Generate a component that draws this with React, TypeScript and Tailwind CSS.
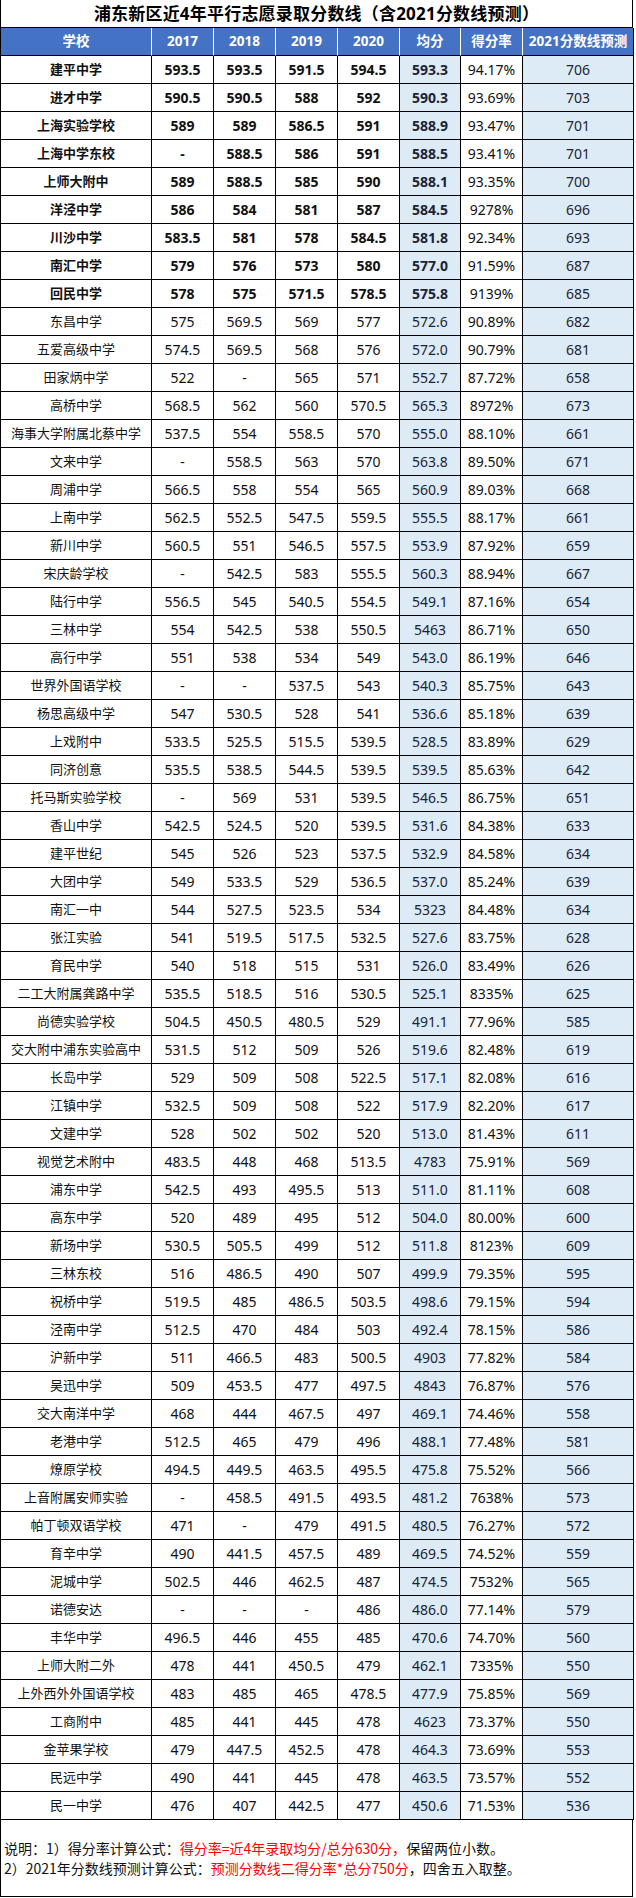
import React from "react";

type Row = [string, string, string, string, string, string, string, string];

const rows: Row[] = [
  ["建平中学", "593.5", "593.5", "591.5", "594.5", "593.3", "94.17%", "706"],
  ["进才中学", "590.5", "590.5", "588", "592", "590.3", "93.69%", "703"],
  ["上海实验学校", "589", "589", "586.5", "591", "588.9", "93.47%", "701"],
  ["上海中学东校", "-", "588.5", "586", "591", "588.5", "93.41%", "701"],
  ["上师大附中", "589", "588.5", "585", "590", "588.1", "93.35%", "700"],
  ["洋泾中学", "586", "584", "581", "587", "584.5", "9278%", "696"],
  ["川沙中学", "583.5", "581", "578", "584.5", "581.8", "92.34%", "693"],
  ["南汇中学", "579", "576", "573", "580", "577.0", "91.59%", "687"],
  ["回民中学", "578", "575", "571.5", "578.5", "575.8", "9139%", "685"],
  ["东昌中学", "575", "569.5", "569", "577", "572.6", "90.89%", "682"],
  ["五爱高级中学", "574.5", "569.5", "568", "576", "572.0", "90.79%", "681"],
  ["田家炳中学", "522", "-", "565", "571", "552.7", "87.72%", "658"],
  ["高桥中学", "568.5", "562", "560", "570.5", "565.3", "8972%", "673"],
  ["海事大学附属北蔡中学", "537.5", "554", "558.5", "570", "555.0", "88.10%", "661"],
  ["文来中学", "-", "558.5", "563", "570", "563.8", "89.50%", "671"],
  ["周浦中学", "566.5", "558", "554", "565", "560.9", "89.03%", "668"],
  ["上南中学", "562.5", "552.5", "547.5", "559.5", "555.5", "88.17%", "661"],
  ["新川中学", "560.5", "551", "546.5", "557.5", "553.9", "87.92%", "659"],
  ["宋庆龄学校", "-", "542.5", "583", "555.5", "560.3", "88.94%", "667"],
  ["陆行中学", "556.5", "545", "540.5", "554.5", "549.1", "87.16%", "654"],
  ["三林中学", "554", "542.5", "538", "550.5", "5463", "86.71%", "650"],
  ["高行中学", "551", "538", "534", "549", "543.0", "86.19%", "646"],
  ["世界外国语学校", "-", "-", "537.5", "543", "540.3", "85.75%", "643"],
  ["杨思高级中学", "547", "530.5", "528", "541", "536.6", "85.18%", "639"],
  ["上戏附中", "533.5", "525.5", "515.5", "539.5", "528.5", "83.89%", "629"],
  ["同济创意", "535.5", "538.5", "544.5", "539.5", "539.5", "85.63%", "642"],
  ["托马斯实验学校", "-", "569", "531", "539.5", "546.5", "86.75%", "651"],
  ["香山中学", "542.5", "524.5", "520", "539.5", "531.6", "84.38%", "633"],
  ["建平世纪", "545", "526", "523", "537.5", "532.9", "84.58%", "634"],
  ["大团中学", "549", "533.5", "529", "536.5", "537.0", "85.24%", "639"],
  ["南汇一中", "544", "527.5", "523.5", "534", "5323", "84.48%", "634"],
  ["张江实验", "541", "519.5", "517.5", "532.5", "527.6", "83.75%", "628"],
  ["育民中学", "540", "518", "515", "531", "526.0", "83.49%", "626"],
  ["二工大附属龚路中学", "535.5", "518.5", "516", "530.5", "525.1", "8335%", "625"],
  ["尚德实验学校", "504.5", "450.5", "480.5", "529", "491.1", "77.96%", "585"],
  ["交大附中浦东实验高中", "531.5", "512", "509", "526", "519.6", "82.48%", "619"],
  ["长岛中学", "529", "509", "508", "522.5", "517.1", "82.08%", "616"],
  ["江镇中学", "532.5", "509", "508", "522", "517.9", "82.20%", "617"],
  ["文建中学", "528", "502", "502", "520", "513.0", "81.43%", "611"],
  ["视觉艺术附中", "483.5", "448", "468", "513.5", "4783", "75.91%", "569"],
  ["浦东中学", "542.5", "493", "495.5", "513", "511.0", "81.11%", "608"],
  ["高东中学", "520", "489", "495", "512", "504.0", "80.00%", "600"],
  ["新场中学", "530.5", "505.5", "499", "512", "511.8", "8123%", "609"],
  ["三林东校", "516", "486.5", "490", "507", "499.9", "79.35%", "595"],
  ["祝桥中学", "519.5", "485", "486.5", "503.5", "498.6", "79.15%", "594"],
  ["泾南中学", "512.5", "470", "484", "503", "492.4", "78.15%", "586"],
  ["沪新中学", "511", "466.5", "483", "500.5", "4903", "77.82%", "584"],
  ["吴迅中学", "509", "453.5", "477", "497.5", "4843", "76.87%", "576"],
  ["交大南洋中学", "468", "444", "467.5", "497", "469.1", "74.46%", "558"],
  ["老港中学", "512.5", "465", "479", "496", "488.1", "77.48%", "581"],
  ["燎原学校", "494.5", "449.5", "463.5", "495.5", "475.8", "75.52%", "566"],
  ["上音附属安师实验", "-", "458.5", "491.5", "493.5", "481.2", "7638%", "573"],
  ["帕丁顿双语学校", "471", "-", "479", "491.5", "480.5", "76.27%", "572"],
  ["育辛中学", "490", "441.5", "457.5", "489", "469.5", "74.52%", "559"],
  ["泥城中学", "502.5", "446", "462.5", "487", "474.5", "7532%", "565"],
  ["诺德安达", "-", "-", "-", "486", "486.0", "77.14%", "579"],
  ["丰华中学", "496.5", "446", "455", "485", "470.6", "74.70%", "560"],
  ["上师大附二外", "478", "441", "450.5", "479", "462.1", "7335%", "550"],
  ["上外西外外国语学校", "483", "485", "465", "478.5", "477.9", "75.85%", "569"],
  ["工商附中", "485", "441", "445", "478", "4623", "73.37%", "550"],
  ["金苹果学校", "479", "447.5", "452.5", "478", "464.3", "73.69%", "553"],
  ["民远中学", "490", "441", "445", "478", "463.5", "73.57%", "552"],
  ["民一中学", "476", "407", "442.5", "477", "450.6", "71.53%", "536"],
];

const headers = ["学校", "2017", "2018", "2019", "2020", "均分", "得分率", "2021分数线预测"];

const grid = "grid grid-cols-[151px_62px_62px_62px_62px_61px_62px_111px]";

export default function App() {
  return (
    <div className="w-[636px] bg-white font-['Noto_Sans','Noto_Sans_CJK_SC',sans-serif] text-black">
      <div className="w-[633px] border-l border-black">
        <div className="h-[28px] flex items-center justify-center border-b border-r border-black text-[17px] font-bold leading-none tracking-[0.2px]">
          浦东新区近4年平行志愿录取分数线（含2021分数线预测）
        </div>
        <div className={`${grid} h-[28px] bg-[#4472c4]`}>
          {headers.map((h, i) => (
            <div
              key={h}
              className={`flex items-center justify-center border-b border-black text-[13.5px] font-bold text-white leading-none ${
                i === headers.length - 1 ? "border-r border-r-black" : "border-r border-r-white"
              }`}
            >
              {h}
            </div>
          ))}
        </div>
        {rows.map((r, ri) => {
          const bold = ri < 9;
          return (
            <div key={r[0]} className={`${grid} h-[28px]`}>
              {r.map((c, ci) => {
                const blue = ci === 5 || ci === 7;
                const isBold = bold && ci <= 5;
                return (
                  <div
                    key={ci}
                    className={`flex items-center justify-center border-r border-b border-black leading-none whitespace-nowrap ${
                      ci === 0 ? "text-[13px]" : "text-[14px]"
                    } ${blue ? "bg-[#ddebf7] text-[#1c2333]" : "text-[#111111]"} ${
                      isBold ? "font-bold" : "font-normal"
                    }`}
                  >
                    {c}
                  </div>
                );
              })}
            </div>
          );
        })}
        <div className="h-[77px] border-r border-b border-black flex flex-col justify-center pl-[3px] text-[14px] leading-[20px] text-[#111111] font-['Noto_Sans_CJK_SC','Noto_Sans',sans-serif]">
          <div>
            说明：1）得分率计算公式：
            <span className="text-[#ff0000]">得分率=近4年录取均分/总分630分，</span>
            保留两位小数。
          </div>
          <div>
            2）2021年分数线预测计算公式：
            <span className="text-[#ff0000]">预测分数线二得分率*总分750分</span>
            ，四舍五入取整。
          </div>
        </div>
      </div>
    </div>
  );
}
